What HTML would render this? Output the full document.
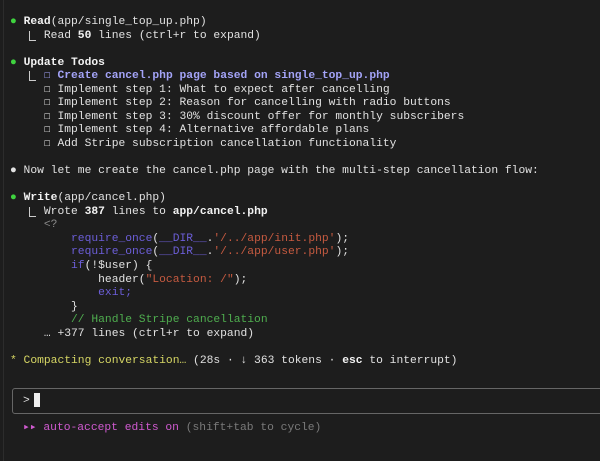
<!DOCTYPE html>
<html><head><meta charset="utf-8"><style>
html,body{margin:0;padding:0;}
body{width:600px;height:461px;background:#1d1d1d;overflow:hidden;position:relative;font-family:"Liberation Mono","DejaVu Sans Mono",monospace;font-size:11.3px;color:#e2e2e2;}
#w{position:absolute;left:0;top:2px;width:600px;height:459px}
.l{position:absolute;white-space:pre;line-height:14px;height:14px;}
b{font-weight:bold;color:#f2f2f2}
.g{color:#3fd33f}
.p{color:#a3a3f7;font-weight:bold}
.k{color:#6c5ed8}
.s{color:#c65a40}
.c{color:#4fae4f}
.y{color:#d6d664}
.m{color:#d05ad0}
.gr{color:#7a7a7a}
.dim{color:#8a8a8a}
.t{position:absolute;left:29px;height:9px;border-left:1px solid #ccc;border-bottom:1px solid #ccc;width:6px}
#lb{position:absolute;left:3px;top:0;width:1px;height:461px;background:#2c2c2c}
#box{position:absolute;left:12px;top:388px;width:600px;height:26px;border:1px solid #666;border-radius:3px;box-sizing:border-box}
#cur{position:absolute;left:34px;top:393px;width:6px;height:14px;background:#eee}
</style></head><body>
<div id="lb"></div>
<div id="box"></div>
<div id="cur"></div>
<div class="l" style="left:23px;top:394px">&gt;</div>
<div class="l" style="left:23px;top:421px"><span class="m">▸▸ auto-accept edits on</span> <span class="gr">(shift+tab to cycle)</span></div>
<div id="w">
<div class="l" style="left:10px;top:13px"><span class="g">●</span> <b>Read</b>(app/single_top_up.php)</div>
<div class="t" style="top:29px"></div>
<div class="l" style="left:10px;top:27px">     Read <b>50</b> lines (ctrl+r to expand)</div>
<div class="l" style="left:10px;top:54px"><span class="g">●</span> <b>Update Todos</b></div>
<div class="t" style="top:69px"></div>
<div class="l" style="left:10px;top:67px">     <span class="p">☐ Create cancel.php page based on single_top_up.php</span></div>
<div class="l" style="left:10px;top:81px">     ☐ Implement step 1: What to expect after cancelling</div>
<div class="l" style="left:10px;top:94px">     ☐ Implement step 2: Reason for cancelling with radio buttons</div>
<div class="l" style="left:10px;top:108px">     ☐ Implement step 3: 30% discount offer for monthly subscribers</div>
<div class="l" style="left:10px;top:121px">     ☐ Implement step 4: Alternative affordable plans</div>
<div class="l" style="left:10px;top:135px">     ☐ Add Stripe subscription cancellation functionality</div>
<div class="l" style="left:10px;top:162px">● Now let me create the cancel.php page with the multi-step cancellation flow:</div>
<div class="l" style="left:10px;top:189px"><span class="g">●</span> <b>Write</b>(app/cancel.php)</div>
<div class="t" style="top:205px"></div>
<div class="l" style="left:10px;top:203px">     Wrote <b>387</b> lines to <b>app/cancel.php</b></div>
<div class="l" style="left:10px;top:216px">     <span class="dim">&lt;?</span></div>
<div class="l" style="left:10px;top:230px">         <span class="k">require_once</span>(<span class="k">__DIR__</span>.<span class="s">'/../app/init.php'</span>);</div>
<div class="l" style="left:10px;top:243px">         <span class="k">require_once</span>(<span class="k">__DIR__</span>.<span class="s">'/../app/user.php'</span>);</div>
<div class="l" style="left:10px;top:257px">         <span class="k">if</span>(!$user) {</div>
<div class="l" style="left:10px;top:271px">             header(<span class="s">"Location: /"</span>);</div>
<div class="l" style="left:10px;top:284px">             <span class="k">exit;</span></div>
<div class="l" style="left:10px;top:298px">         }</div>
<div class="l" style="left:10px;top:311px">         <span class="c">// Handle Stripe cancellation</span></div>
<div class="l" style="left:10px;top:325px">     … +377 lines (ctrl+r to expand)</div>
<div class="l" style="left:10px;top:352px"><span class="y">* Compacting conversation…</span> (28s · ↓ 363 tokens · <b>esc</b> to interrupt)</div>
</div>
</body></html>
